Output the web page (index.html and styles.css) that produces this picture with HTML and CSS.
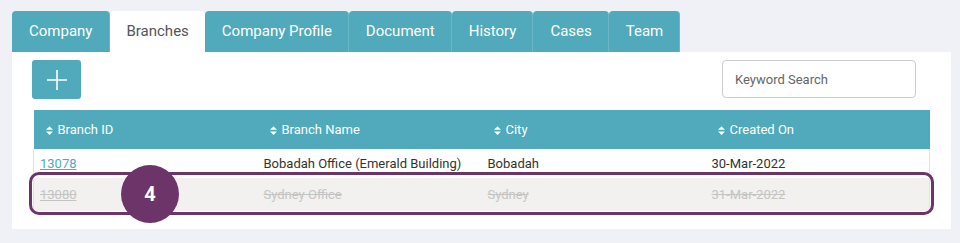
FILE: index.html
```html
<!DOCTYPE html>
<html lang="en">
<head>
    <meta charset="UTF-8">
    <title>Branches</title>
    <link rel="stylesheet" href="styles.css">
</head>
<body>

    <div class="tabs">
        <div class="tab">Company</div>
        <div class="tab active">Branches</div>
        <div class="tab">Company Profile</div>
        <div class="tab">Document</div>
        <div class="tab">History</div>
        <div class="tab">Cases</div>
        <div class="tab">Team</div>
    </div>

    <div class="panel">
        <div class="toolbar">
            <button class="add-btn">
                <svg width="22" height="22" viewBox="0 0 22 22"><path d="M11 1v20M1 11h20" stroke="#fff" stroke-width="1.6"/></svg>
            </button>
            <input type="text" class="search" placeholder="Keyword Search">
        </div>

        <div class="table-wrap">
            <table class="branch-table">
                <thead>
                    <tr>
                        <th><svg class="sort" viewBox="0 0 8 10"><path d="M0 4L4 0L8 4ZM0 6L4 10L8 6Z" fill="#fff"/></svg>Branch ID</th>
                        <th><svg class="sort" viewBox="0 0 8 10"><path d="M0 4L4 0L8 4ZM0 6L4 10L8 6Z" fill="#fff"/></svg>Branch Name</th>
                        <th><svg class="sort" viewBox="0 0 8 10"><path d="M0 4L4 0L8 4ZM0 6L4 10L8 6Z" fill="#fff"/></svg>City</th>
                        <th><svg class="sort" viewBox="0 0 8 10"><path d="M0 4L4 0L8 4ZM0 6L4 10L8 6Z" fill="#fff"/></svg>Created On</th>
                    </tr>
                </thead>
                <tbody>
                    <tr>
                        <td><a href="#">13078</a></td>
                        <td>Bobadah Office (Emerald Building)</td>
                        <td>Bobadah</td>
                        <td>30-Mar-2022</td>
                    </tr>
                    <tr class="deleted">
                        <td><a href="#">13080</a></td>
                        <td>Sydney Office</td>
                        <td>Sydney</td>
                        <td>31-Mar-2022</td>
                    </tr>
                </tbody>
            </table>
            <div class="highlight"></div>
            <div class="step">4</div>
        </div>
    </div>

</body>
</html>
```

FILE: styles.css
```css
body {
    font-family: 'Roboto', 'Liberation Sans', sans-serif;
    background: #f0f1f6;
    margin: 0;
    padding: 11px 9px 0 12px;
    color: #333;
}

.tabs {
    display: flex;
    height: 41px;
}

.tab {
    background: #50aabb;
    color: #fff;
    font-size: 15px;
    padding: 0 17px;
    line-height: 41px;
    border-radius: 4px 4px 0 0;
    box-shadow: inset -1px 0 0 rgba(255, 255, 255, 0.15);
}

.tab:first-child {
    padding: 0 18px 0 17px;
}

.tab.active {
    background: #fff;
    color: #555;
    padding: 0 16px;
}

.panel {
    background: #fff;
    padding: 8px 21px 18px 21px;
}

.toolbar {
    display: flex;
    justify-content: space-between;
    align-items: flex-start;
    margin-bottom: 11px;
}

.add-btn {
    width: 49px;
    height: 39px;
    margin-left: -1px;
    background: #50aabb;
    border: none;
    border-radius: 3px;
    display: flex;
    align-items: center;
    justify-content: center;
    padding: 0;
}

.search {
    width: 194px;
    height: 38px;
    margin-right: 14px;
    box-sizing: border-box;
    border: 1px solid #ccc;
    border-radius: 4px;
    padding: 0 12px;
    font-family: 'Roboto', 'Liberation Sans', sans-serif;
    font-size: 13px;
}

.search::placeholder {
    color: #666;
}

.table-wrap {
    position: relative;
}

.branch-table {
    width: 100%;
    border-collapse: collapse;
    table-layout: fixed;
    font-size: 13px;
}

.branch-table th {
    background: #50aabb;
    color: #fff;
    font-weight: normal;
    text-align: left;
    height: 39px;
    padding: 0 12px;
}

.sort {
    width: 7px;
    height: 9px;
    margin-right: 5px;
    vertical-align: -1px;
}

.branch-table td {
    padding: 0 6px;
    height: 29px;
}

.branch-table tbody tr td:first-child {
    border-left: 1px solid #e2e2e2;
}

.branch-table tbody tr td:last-child {
    border-right: 1px solid #e2e2e2;
}

.branch-table a {
    color: #50aabb;
}

.deleted td {
    background: #f2f1ef;
    color: #c4c4c4;
    text-decoration: line-through;
    height: 33px;
}

.deleted a {
    color: #c4c4c4 !important;
}

.highlight {
    position: absolute;
    left: -4px;
    right: -4px;
    top: 62px;
    height: 43px;
    box-sizing: border-box;
    border: 3px solid #6d3469;
    border-radius: 10px;
}

.step {
    position: absolute;
    left: 88px;
    top: 55px;
    width: 58px;
    height: 58px;
    border-radius: 50%;
    background: #6d3469;
    color: #fff;
    font-size: 20px;
    font-weight: bold;
    display: flex;
    align-items: center;
    justify-content: center;
}
```
